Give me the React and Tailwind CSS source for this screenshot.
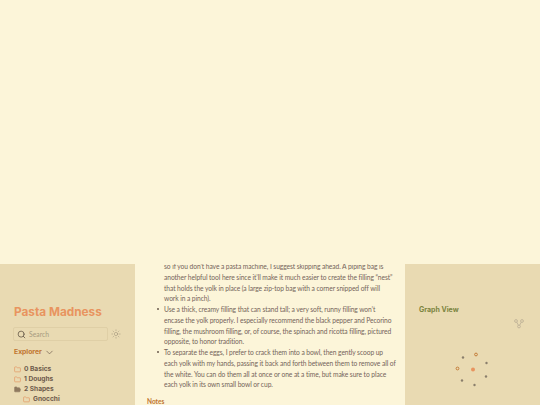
import React from "react";
import { Search, Sun, ChevronDown, Folder, FolderOpen } from "lucide-react";

const body = { fontFamily: '"Lato", sans-serif' };

const paragraphs = [
  [
    "so if you don\u2019t have a pasta machine, I suggest skipping ahead. A piping bag is",
    "another helpful tool here since it\u2019ll make it much easier to create the filling \u201cnest\u201d",
    "that holds the yolk in place (a large zip-top bag with a corner snipped off will",
    "work in a pinch).",
  ],
  [
    "Use a thick, creamy filling that can stand tall; a very soft, runny filling won\u2019t",
    "encase the yolk properly. I especially recommend the black pepper and Pecorino",
    "filling, the mushroom filling, or, of course, the spinach and ricotta filling, pictured",
    "opposite, to honor tradition.",
  ],
  [
    "To separate the eggs, I prefer to crack them into a bowl, then gently scoop up",
    "each yolk with my hands, passing it back and forth between them to remove all of",
    "the white. You can do them all at once or one at a time, but make sure to place",
    "each yolk in its own small bowl or cup.",
  ],
];

const FileRow = ({ name, open, indent }) => (
  <div className={`flex h-[10px] items-center gap-[3px] ${indent ? "pl-[9px]" : ""}`}>
    {open ? (
      <FolderOpen size={7} className="fill-current text-[#8f7a60]" strokeWidth={2} />
    ) : (
      <Folder size={7} className="text-[#e39b68]" strokeWidth={2.5} />
    )}
    <span className="text-[6.6px] leading-[10px] font-bold text-[#6e5a4c]">{name}</span>
  </div>
);

const Explorer = () => (
  <aside className="flex w-[135px] shrink-0 flex-col bg-[#e9dab2] pl-[14px] pt-[41px]">
    <h1 className="h-[15px] text-[11.8px] leading-[15px] font-bold text-[#e8945f]">Pasta Madness</h1>
    <div className="mt-[7px] flex items-center">
      <div className="-ml-[1px] flex h-[14px] w-[95px] items-center rounded-[2px] border border-[#dfcfa6] pl-[3px]">
        <Search size={9} className="text-[#5c5040]" />
        <span className="ml-[3px] text-[6.8px] text-[#a89a80]" style={body}>Search</span>
      </div>
      <Sun size={10} className="ml-[3px] text-[#8a7e6c]" strokeWidth={1} />
    </div>
    <div className="mt-[6px] flex h-[11px] items-center gap-[2px]">
      <span className="text-[6.8px] font-bold text-[#c0742f]">Explorer</span>
      <ChevronDown size={11} className="text-[#6e5a4c]" strokeWidth={1.5} />
    </div>
    <div className="mt-[6px] flex flex-col">
      <FileRow name="0 Basics" />
      <FileRow name="1 Doughs" />
      <FileRow name="2 Shapes" open />
      <FileRow name="Gnocchi" indent />
    </div>
  </aside>
);

const Article = () => (
  <main className="w-[270px] shrink-0 overflow-hidden bg-[#fcf5d9] pl-[12px]" style={body}>
    <ul className="-mt-[3px] text-[6.7px] leading-[10.75px] tracking-[-0.08px] text-[#75645a]">
      {paragraphs.map((lines, i) => (
        <li key={i} className="relative pl-[17px]">
          {i > 0 && <span className="absolute left-[10px] top-[4px] h-[2px] w-[2px] rounded-full bg-[#6b5a4c]" />}
          {lines.map((l) => (
            <div key={l} className="whitespace-nowrap">{l}</div>
          ))}
        </li>
      ))}
    </ul>
    <h4 className="mt-[8px] text-[6.5px] leading-[7px] font-bold text-[#c0742f]">Notes</h4>
  </main>
);

const nodes = [
  { x: 476, y: 354.5, hollow: true },
  { x: 463, y: 357.5 },
  { x: 486.5, y: 363 },
  { x: 457.5, y: 368.5, hollow: true },
  { x: 473, y: 369.5, big: true },
  { x: 486, y: 376.5 },
  { x: 462, y: 380.5 },
  { x: 474.5, y: 385 },
];

const GraphPanel = () => (
  <aside className="relative flex-1 bg-[#e9dab2] pl-[14px] pt-[40px]">
    <h3 className="text-[7px] leading-[11px] font-bold text-[#7b8440]">Graph View</h3>
    <svg className="absolute left-[109px] top-[55px]" width="10" height="10" viewBox="0 0 10 10" fill="none" stroke="#b5a890" strokeWidth="0.7">
      <circle cx="2" cy="2" r="1.4" />
      <circle cx="8" cy="2" r="1.4" />
      <circle cx="5" cy="7.5" r="1.4" />
      <path d="M2.8 3.2 4.3 6.2M7.2 3.2 5.7 6.2" />
    </svg>
    <svg className="absolute left-0 top-0" width="135" height="141" viewBox="405 264 135 141">
      {nodes.map((n) =>
        n.hollow ? (
          <circle key={n.x} cx={n.x} cy={n.y} r="1.4" fill="none" stroke="#c0742f" strokeWidth="0.9" />
        ) : (
          <circle key={n.x} cx={n.x} cy={n.y} r={n.big ? 2 : 1.2} fill={n.big ? "#e8945f" : "#8a7e6c"} />
        )
      )}
    </svg>
  </aside>
);

export default function App() {
  return (
    <div className="flex h-[405px] w-[540px] flex-col overflow-hidden bg-[#fcf5d9]" style={{ fontFamily: '"Inter", sans-serif' }}>
      <div className="h-[264px] shrink-0" />
      <div className="flex h-[141px]">
        <Explorer />
        <Article />
        <GraphPanel />
      </div>
    </div>
  );
}
